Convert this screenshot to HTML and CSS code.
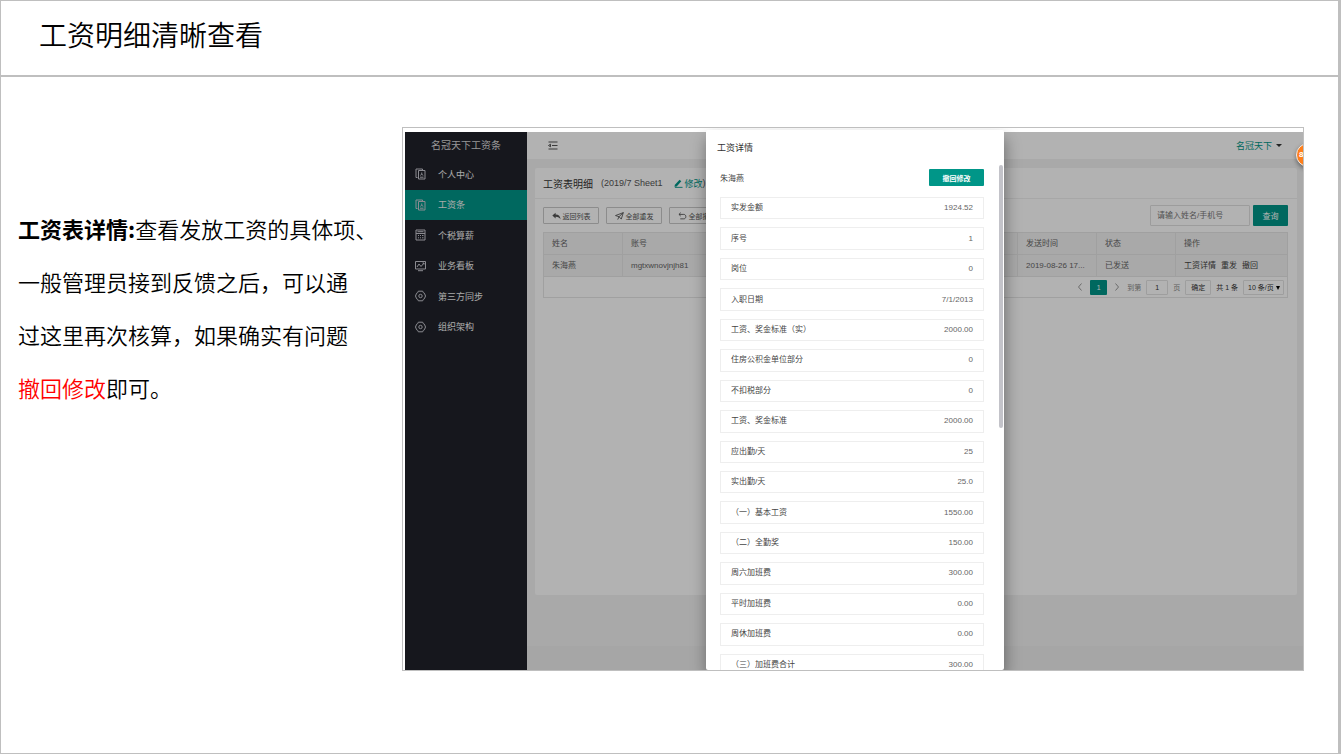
FILE: index.html
```html
<!DOCTYPE html>
<html lang="zh-CN">
<head>
<meta charset="utf-8">
<title>工资明细清晰查看</title>
<link rel="stylesheet" href="styles.css">
</head>
<body>
<svg class="sprite" width="0" height="0" aria-hidden="true">
  <symbol id="i-doc" viewBox="0 0 11 12"><path d="M2.500 9.500H1V1h6.500v1M3.500 2.500h6.500v8.500h-6.500zM5 9.200h3.500M5.500 7.500c0-1.500 2.500-1.500 2.500 0M6.750 4.500v1.500"/></symbol>
  <symbol id="i-calc" viewBox="0 0 11 12"><path d="M1 1h9v10H1zM1 4.500h9M2.500 2.700h6M3 6.500h1M5 6.500h1M7 6.500h1.500M3 8.800h1M5 8.800h1M7 8.800h1.500"/></symbol>
  <symbol id="i-board" viewBox="0 0 11 12"><path d="M.5 1.500h10v7.500H.5zM2 7l2-3 2 2.500 3-3.500M3 10.700h5M7.500 3H9v1.500"/></symbol>
  <symbol id="i-gear" viewBox="0 0 11 12"><path d="M3.300 1.200h4.400l.6 1.500 1.100.5L10.500 6l-1.100 2.800-1.100.5-.6 1.500H3.300l-.6-1.500-1.100-.5L.5 6l1.100-2.800 1.100-.5z"/><circle cx="5.500" cy="6" r="1.700"/></symbol>
</svg>
<div class="slide">
  <header class="slide-head"><h1>工资明细清晰查看</h1></header>
  <main class="slide-body">
    <p class="note"><strong>工资表详情:</strong>查看发放工资的具体项、<br>一般管理员接到反馈之后，可以通<br>过这里再次核算，如果确实有问题<br><em>撤回修改</em>即可。</p>
    <div class="shot">
      <div class="app">
        <nav class="side">
          <div class="brand">名冠天下工资条</div>
          <ul class="menu">
            <li><a href="#"><svg><use href="#i-doc"/></svg>个人中心</a></li>
            <li><a href="#" class="on"><svg><use href="#i-doc"/></svg>工资条</a></li>
            <li><a href="#"><svg><use href="#i-calc"/></svg>个税算薪</a></li>
            <li><a href="#"><svg><use href="#i-board"/></svg>业务看板</a></li>
            <li><a href="#"><svg><use href="#i-gear"/></svg>第三方同步</a></li>
            <li><a href="#"><svg><use href="#i-gear"/></svg>组织架构</a></li>
          </ul>
        </nav>
        <div class="content">
          <div class="topbar">
            <svg class="fold" viewBox="0 0 10 9"><path d="M.5 1h9M4 4.500h5.500M.5 8h9M2.500 3.200v2.600L.5 4.500z"/></svg>
            <a href="#" class="user">名冠天下<i class="caret"></i></a>
          </div>
          <section class="card">
            <div class="card-head">
              <h2>工资表明细</h2>
              <span class="sheet">(2019/7 Sheet1</span>
              <a href="#" class="edit"><svg viewBox="0 0 10 10"><path class="fill" d="M1 6.500 6.200.8l1.900 1.700L3 8.200l-2.500.5z"/><path d="M1 9.300h8.500"/></svg>修改</a><span class="sheet">)</span>
            </div>
            <div class="tools">
              <button type="button"><svg viewBox="0 0 10 9"><path class="fill" d="M.3 4 4 .8v2c3.500 0 5.500 2 5.500 5.700C8.500 6.200 7 5.300 4 5.300v2z"/></svg>返回列表</button>
              <button type="button"><svg viewBox="0 0 10 9"><path d="M.5 4 9.300.7 7 8 4.500 5.300zM4.500 5.300 9.300.7M4.500 5.300 3 8.500"/></svg>全部重发</button>
              <button type="button"><svg viewBox="0 0 10 9"><path d="M3 .8 1 2.700l2 1.900M1 2.700h5.500c3 0 3 5 0 5H2.500"/></svg>全部撤回</button>
              <div class="search"><input type="text" placeholder="请输入姓名/手机号" aria-label="请输入姓名/手机号"><button type="button" class="go">查询</button></div>
            </div>
            <div class="grid">
              <table>
                <colgroup><col class="c1"><col><col class="c3"><col class="c4"><col class="c5"></colgroup>
                <thead><tr><th>姓名</th><th>账号</th><th>发送时间</th><th>状态</th><th>操作</th></tr></thead>
                <tbody><tr><td>朱海燕</td><td>mgtxwnovjnjh81</td><td>2019-08-26 17...</td><td>已发送</td><td class="acts"><a href="#">工资详情</a><a href="#">重发</a><a href="#">撤回</a></td></tr></tbody>
              </table>
              <div class="pager">
                <svg class="arr" viewBox="0 0 6 8"><path d="M4.500.5 1.500 4l3 3.500"/></svg>
                <button type="button" class="cur">1</button>
                <svg class="arr" viewBox="0 0 6 8"><path d="m1.500.5 3 3.500-3 3.500"/></svg>
                <label for="pg">到第</label><input id="pg" type="text" value="1"><span class="dim">页</span>
                <button type="button" class="ok">确定</button>
                <span>共 1 条</span>
                <span class="sel"><select aria-label="10 条/页"><option>10 条/页</option></select></span>
              </div>
            </div>
          </section>
          <div class="foot"></div>
        </div>
        <div class="shade"></div>
        <span class="bubble">8</span>
        <div class="modal" role="dialog" aria-labelledby="mt">
          <h3 id="mt">工资详情</h3>
          <div class="person"><span>朱海燕</span><button type="button">撤回修改</button></div>
          <ul class="items">
            <li><span>实发金额</span><b>1924.52</b></li>
            <li><span>序号</span><b>1</b></li>
            <li><span>岗位</span><b>0</b></li>
            <li><span>入职日期</span><b>7/1/2013</b></li>
            <li><span>工资、奖金标准（实）</span><b>2000.00</b></li>
            <li><span>住房公积金单位部分</span><b>0</b></li>
            <li><span>不扣税部分</span><b>0</b></li>
            <li><span>工资、奖金标准</span><b>2000.00</b></li>
            <li><span>应出勤/天</span><b>25</b></li>
            <li><span>实出勤/天</span><b>25.0</b></li>
            <li><span>（一）基本工资</span><b>1550.00</b></li>
            <li><span>（二）全勤奖</span><b>150.00</b></li>
            <li><span>周六加班费</span><b>300.00</b></li>
            <li><span>平时加班费</span><b>0.00</b></li>
            <li><span>周休加班费</span><b>0.00</b></li>
            <li><span>（三）加班费合计</span><b>300.00</b></li>
          </ul>
          <i class="thumb"></i>
        </div>
      </div>
    </div>
  </main>
</div>
</body>
</html>
```
FILE: styles.css
```css
* { box-sizing: border-box; }
body { margin: 0; background: #fff; color: #000; font-family: "Liberation Sans", "Noto Sans CJK SC", sans-serif; }
h1, h2, h3, p, ul { margin: 0; padding: 0; font-weight: 400; }
ul { list-style: none; }
a { color: inherit; text-decoration: none; }
button, input, select { font: inherit; color: inherit; margin: 0; padding: 0; border-radius: 1px; }
svg { fill: none; stroke: currentColor; stroke-width: 1; flex: none; }
.fill { fill: currentColor; stroke: none; }
.sprite { position: absolute; }

.slide { min-height: 100vh; border: 1px solid #bfbfbf; border-right-width: 3px; }
.slide-head { height: 76px; padding: 13px 38px 0; border-bottom: 2px solid #bfbfbf; }
.slide-head h1 { font: 350 28px/40px "Noto Sans CJK SC", sans-serif; }
.slide-body { display: flex; align-items: flex-start; padding: 50px 34px 0 17px; }
.note { width: 384px; flex: none; padding-top: 75px; font: 350 22px/53px "Noto Sans CJK SC", sans-serif; white-space: nowrap; }
.note strong { font-weight: 700; }
.note em { font-style: normal; color: #f00; }

.shot { flex: 1; min-width: 0; aspect-ratio: 902 / 544; padding: 4px 0 0 2px; border: 1px solid #bfbfbf; overflow: hidden; }
.app { position: relative; display: flex; height: 100%; font-size: 8px; color: #666; }

.side { width: 122px; flex: none; background: #20222a; color: #f4f4f4; }
.brand { height: 27px; line-height: 27px; font-size: 10px; text-align: center; color: #d8d8d8; }
.menu { display: grid; grid-auto-rows: 1fr; height: 183px; font-size: 9px; }
.menu a { display: flex; align-items: center; gap: 12px; height: 100%; padding-left: 10px; }
.menu svg { width: 11px; height: 12px; color: #c8c8d0; }
.menu .on { background: #009688; }

.content { flex: 1; min-width: 0; display: flex; flex-direction: column; background: #f2f2f2; }
.topbar { display: flex; align-items: center; justify-content: space-between; height: 27px; padding: 0 21px; background: #fff; font-size: 9px; }
.fold { width: 10px; height: 9px; color: #555; }
.user { display: flex; align-items: center; gap: 4px; color: #009688; }
.caret { border: 3px solid transparent; border-top-color: #333; border-bottom: 0; }

.card { flex: 1; margin: 9px 6px 0 8px; background: #fff; border-radius: 2px; }
.card-head { display: flex; align-items: center; height: 31px; padding: 0 8px; border-bottom: 1px solid #f0f0f0; font-size: 9px; color: #555; }
.card-head h2 { margin-right: 8px; font-size: 10px; color: #333; }
.edit { display: flex; align-items: center; gap: 2px; margin-left: 11px; color: #009688; }
.edit svg { width: 9px; height: 9px; }
.tools { display: flex; align-items: center; gap: 7px; padding: 6px 9px 6px 8px; }
.tools button { display: flex; align-items: center; justify-content: center; gap: 2px; width: 56px; height: 17px; border: 1px solid #c9c9c9; background: #fff; font-size: 7px; color: #555; }
.tools button svg { width: 9px; height: 8px; }
.search { display: flex; gap: 3px; margin-left: auto; }
.search input { width: 100px; height: 21px; padding: 0 6px; border: 1px solid #e0e0e0; background: #fff; }
.search input::placeholder { color: #777; }
.tools .go { width: 35px; height: 21px; border: 0; background: #009688; color: #fff; font-size: 8px; }

.grid { margin: 0 9px 0 8px; border: 1px solid #e6e6e6; }
table { width: 100%; table-layout: fixed; border-collapse: separate; border-spacing: 0; }
.c1 { width: 79px; } .c3 { width: 79px; } .c4 { width: 79px; } .c5 { width: 111px; }
th, td { height: 22px; padding: 0 8px; border-right: 1px solid #e6e6e6; border-bottom: 1px solid #e6e6e6; background: #f2f2f2; font-weight: 400; text-align: left; white-space: nowrap; line-height: 12px; }
th:last-child, td:last-child { border-right: 0; }
.acts a { margin-right: 5px; color: #444; }
.pager { display: flex; align-items: center; justify-content: flex-end; gap: 5px; height: 20px; padding-right: 3px; font-size: 7px; color: #333; }
.pager button, .pager input, .pager select { height: 15px; border: 1px solid #e2e2e2; background: #fff; text-align: center; }
.arr { width: 6px; height: 8px; margin: 0 2px; color: #999; }
.pager .cur { width: 17px; border: 0; background: #009688; color: #fff; }
.pager input { width: 22px; }
.pager .ok { width: 26px; }
.pager label, .dim { color: #888; }
.sel { position: relative; display: flex; }
.sel select { appearance: none; width: 41px; padding-left: 4px; text-align: left; }
.sel::after { content: ""; position: absolute; right: 4px; top: 6px; border: 2px solid transparent; border-top: 4px solid #000; border-bottom: 0; }
.foot { height: 24px; margin-top: 51px; background: #eee; }

.shade { position: absolute; inset: 0; background: rgba(0, 0, 0, .3); }
.bubble { position: absolute; right: -17px; top: 11px; width: 24px; height: 24px; padding-left: 2px; border: 1px solid #eee; border-radius: 50%; background: #ff7f1a; color: #fff; font: 700 8px/22px "Liberation Sans", sans-serif; box-shadow: 0 2px 4px rgba(0, 0, 0, .4); }

.modal { position: absolute; top: -2px; bottom: 0; left: 2px; right: 0; width: 298px; margin: 0 auto; display: flex; flex-direction: column; padding: 0 20px 0 14px; border-radius: 2px; background: #fff; box-shadow: 1px 8px 16px rgba(0, 0, 0, .4); color: #444; }
.modal h3 { height: 35px; margin-left: -3px; line-height: 36px; font-size: 9px; color: #333; }
.person { display: flex; align-items: center; justify-content: space-between; height: 25px; }
.person button { width: 55px; height: 17px; border: 0; background: #009688; color: #fff; font-size: 7px; font-weight: 700; }
.items { flex: 1; min-height: 0; display: grid; grid-auto-rows: 1fr; gap: 8px; margin: 7px 0 -6px; }
.items li { display: flex; align-items: center; justify-content: space-between; min-height: 0; padding: 0 10px; border: 1px solid #eee; line-height: 12px; }
.items b { font-weight: 400; color: #666; }
.thumb { position: absolute; right: 1px; top: 35px; width: 4px; height: 263px; border-radius: 2px; background: #c3c3c9; }
```
